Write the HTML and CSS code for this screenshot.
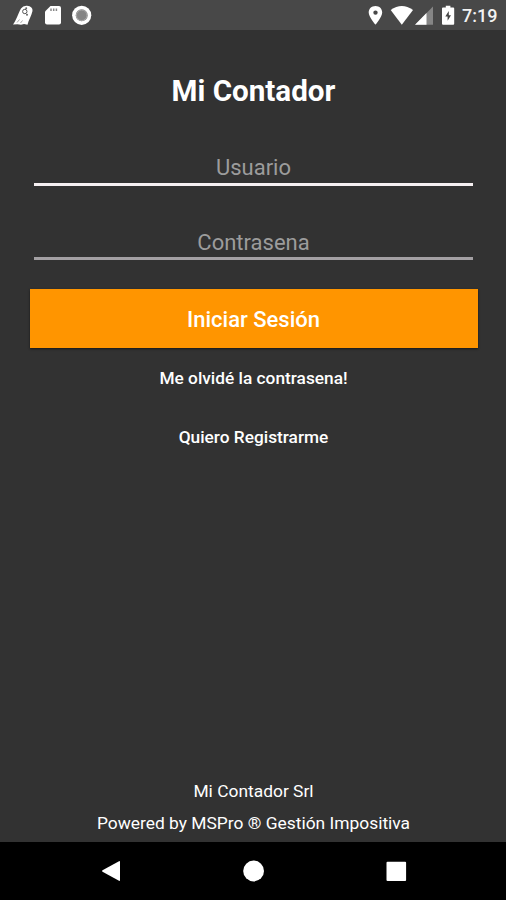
FILE: index.html
```
<!DOCTYPE html>
<html lang="es">
<head>
<meta charset="utf-8">
<title>Mi Contador</title>
<link rel="stylesheet" href="styles.css">
</head>
<body>
<div class="screen">
  <header class="status">
    <svg class="status-left" width="110" height="30" viewBox="0 0 110 30" aria-hidden="true">
      <path d="M13 24.5C16 21 18 14 21 8.5Q23 5.5 27 5.8Q33 6.5 32.5 11C31.5 16 28.5 20 27.5 24.7L24 24L21 24.8L17.5 24.2Z" fill="#fff"/>
      <circle cx="24.8" cy="11.5" r="2.2" fill="none" stroke="#555"/>
      <circle cx="26.2" cy="8.3" r="1" fill="#666"/>
      <circle cx="27" cy="14.8" r="1" fill="#666"/>
      <path d="M17 22.5l2.5-3M20.5 23l2-2.5" stroke="#aaa" fill="none"/>
      <path d="M50.5 6H59Q61 6 61 8V22.5Q61 24.5 59 24.5H47Q45 24.5 45 22.5V11.5Z" fill="#fff"/>
      <path d="M51 8.5v2.5M53.7 8.5v2.5M56.4 8.5v2.5" stroke="#888" stroke-width="1.5"/>
      <circle cx="81.7" cy="15.3" r="9.6" fill="#fff"/>
      <circle cx="81.7" cy="15.3" r="6" fill="#858585"/>
      <circle cx="81.7" cy="15.3" r="5.3" fill="none" stroke="#aaa"/>
    </svg>
    <div class="status-right">
      <svg width="100" height="30" viewBox="360 0 100 30" aria-hidden="true">
        <path fill-rule="evenodd" d="M375.5 6C371.5 6 368.7 8.8 368.7 12.5C368.7 17 375.5 24.7 375.5 24.7S382.2 17 382.2 12.5C382.2 8.8 379.4 6 375.5 6ZM375.5 10.4a2.2 2.2 0 1 1 0 4.4a2.2 2.2 0 1 1 0-4.4Z" fill="#fff"/>
        <path d="M390.7 10Q401.8 2 413 10L401.8 24.7Z" fill="#fff"/>
        <path d="M433 6.5V24.7H415Z" fill="#858585"/>
        <path d="M426.5 13V24.7H415Z" fill="#fff"/>
        <path d="M445.8 5.8H450.4V7.5H453.2Q454.2 7.5 454.2 8.5V23.7Q454.2 24.7 453.2 24.7H443Q442 24.7 442 23.7V8.5Q442 7.5 443 7.5H445.8Z" fill="#fff"/>
        <path d="M448.8 11L445.3 16.5H447.6V20.8L451 15.2H448.8Z" fill="#444"/>
      </svg>
      <span class="clock">7:19</span>
    </div>
  </header>
  <main class="login">
    <h1 class="title">Mi Contador</h1>
    <div class="field focused">Usuario</div>
    <div class="field">Contrasena</div>
    <button class="submit">Iniciar Sesión</button>
    <a class="link">Me olvidé la contrasena!</a>
    <a class="link register">Quiero Registrarme</a>
    <footer class="footer">
      <p class="company">Mi Contador Srl</p>
      <p class="powered">Powered by MSPro ® Gestión Impositiva</p>
    </footer>
  </main>
  <nav class="nav">
    <svg width="506" height="58" viewBox="0 0 506 58" aria-hidden="true" fill="#fff">
      <path d="M102.5 28.2L119 19.2Q120 18.8 120 20V38Q120 39.2 119 38.8L102.5 29.8Q101.5 29 102.5 28.2Z"/>
      <circle cx="253.6" cy="29" r="10.4"/>
      <rect x="386.5" y="19.7" width="19.6" height="19.2" rx="1"/>
    </svg>
  </nav>
</div>
</body>
</html>
```
FILE: styles.css
```
body {
  margin: 0;
  background: #323232;
  color: #fff;
  font-family: Roboto, "Liberation Sans", sans-serif;
}

.screen {
  width: 506px;
  height: 900px;
  display: flex;
  flex-direction: column;
  overflow: hidden;
}

.status {
  height: 30px;
  flex: none;
  display: flex;
  justify-content: space-between;
  background: #484848;
}

.status-right {
  display: flex;
  width: 146px;
}

.status-right svg {
  flex: none;
}

.clock {
  font-size: 18px;
  line-height: 32px;
  font-weight: 500;
  margin-left: 2px;
  color: #f2f2f2;
}

.login {
  flex: 1;
  display: flex;
  flex-direction: column;
  align-items: center;
  padding-left: 1px;
  white-space: nowrap;
}

.title {
  margin: 41px 0 0;
  font-size: 29.6px;
  line-height: 40px;
  font-weight: 700;
}

.field {
  box-sizing: border-box;
  width: 439px;
  height: 33px;
  margin-top: 41px;
  border-bottom: 3px solid #a3a0a3;
  color: #9c9c9c;
  font-size: 22px;
  line-height: 32px;
  text-align: center;
}

.focused {
  margin-top: 42px;
  border-bottom-color: #f6f0f2;
  line-height: 30px;
}

.submit {
  width: 448px;
  height: 59px;
  margin-top: 29px;
  padding: 0;
  border: 0;
  background: #ff9500;
  box-shadow: 0 1px 2px #171717;
  color: #fff;
  font: 500 22px/61px Roboto, sans-serif;
}

.link {
  margin-top: 18px;
  font-size: 17.3px;
  line-height: 24px;
  font-weight: 500;
}

.register {
  margin-top: 35px;
}

.footer {
  margin-top: auto;
  padding-bottom: 7px;
  text-align: center;
  font-size: 17.4px;
  line-height: 24px;
}

.company {
  margin: 0 0 8px;
}

.powered {
  margin: 0;
}

.nav {
  height: 58px;
  flex: none;
  background: #000;
}
```
